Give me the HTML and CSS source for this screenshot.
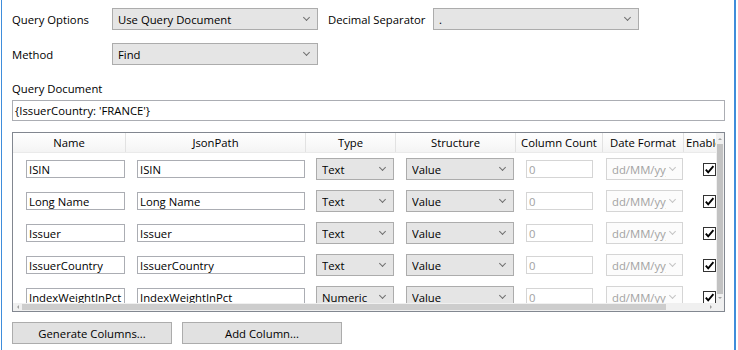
FILE: index.html
```html
<!DOCTYPE html>
<html lang="en">
<head>
    <meta charset="UTF-8">
    <title>Query Options</title>
    <link rel="stylesheet" href="styles.css">
</head>
<body>
    <div class="panel">
        <div class="options">
            <label class="label">Query Options</label>
            <div class="combo"><span class="value">Use Query Document</span><span class="chev"></span></div>
            <label class="label label-right">Decimal Separator</label>
            <div class="combo"><span class="value">.</span><span class="chev"></span></div>
            <label class="label">Method</label>
            <div class="combo"><span class="value">Find</span><span class="chev"></span></div>
        </div>

        <div class="qd-label">Query Document</div>
        <div class="textbox wide">{IssuerCountry: 'FRANCE'}</div>

        <div class="datagrid">
            <div class="grid-view">
                <div class="grid-row grid-header">
                    <div class="head-cell">Name</div>
                    <div class="head-cell">JsonPath</div>
                    <div class="head-cell">Type</div>
                    <div class="head-cell">Structure</div>
                    <div class="head-cell">Column Count</div>
                    <div class="head-cell">Date Format</div>
                    <div class="head-cell head-left">Enabled</div>
                </div>

                <div class="grid-row">
                    <div class="cell c-name"><div class="textbox">ISIN</div></div>
                    <div class="cell c-path"><div class="textbox">ISIN</div></div>
                    <div class="cell c-type"><div class="combo"><span class="value">Text</span><span class="chev"></span></div></div>
                    <div class="cell c-struct"><div class="combo"><span class="value">Value</span><span class="chev"></span></div></div>
                    <div class="cell c-count"><div class="textbox disabled">0</div></div>
                    <div class="cell c-date"><div class="combo disabled"><span class="value">dd/MM/yyyy</span><span class="chev"></span></div></div>
                    <div class="cell c-enabled"><span class="checkbox"><svg width="11" height="11" viewBox="0 0 11 11"><path d="M1.8 5.6 L4.2 8.4 L9.4 2.2" /></svg></span></div>
                </div>

                <div class="grid-row">
                    <div class="cell c-name"><div class="textbox">Long Name</div></div>
                    <div class="cell c-path"><div class="textbox">Long Name</div></div>
                    <div class="cell c-type"><div class="combo"><span class="value">Text</span><span class="chev"></span></div></div>
                    <div class="cell c-struct"><div class="combo"><span class="value">Value</span><span class="chev"></span></div></div>
                    <div class="cell c-count"><div class="textbox disabled">0</div></div>
                    <div class="cell c-date"><div class="combo disabled"><span class="value">dd/MM/yyyy</span><span class="chev"></span></div></div>
                    <div class="cell c-enabled"><span class="checkbox"><svg width="11" height="11" viewBox="0 0 11 11"><path d="M1.8 5.6 L4.2 8.4 L9.4 2.2" /></svg></span></div>
                </div>

                <div class="grid-row">
                    <div class="cell c-name"><div class="textbox">Issuer</div></div>
                    <div class="cell c-path"><div class="textbox">Issuer</div></div>
                    <div class="cell c-type"><div class="combo"><span class="value">Text</span><span class="chev"></span></div></div>
                    <div class="cell c-struct"><div class="combo"><span class="value">Value</span><span class="chev"></span></div></div>
                    <div class="cell c-count"><div class="textbox disabled">0</div></div>
                    <div class="cell c-date"><div class="combo disabled"><span class="value">dd/MM/yyyy</span><span class="chev"></span></div></div>
                    <div class="cell c-enabled"><span class="checkbox"><svg width="11" height="11" viewBox="0 0 11 11"><path d="M1.8 5.6 L4.2 8.4 L9.4 2.2" /></svg></span></div>
                </div>

                <div class="grid-row">
                    <div class="cell c-name"><div class="textbox">IssuerCountry</div></div>
                    <div class="cell c-path"><div class="textbox">IssuerCountry</div></div>
                    <div class="cell c-type"><div class="combo"><span class="value">Text</span><span class="chev"></span></div></div>
                    <div class="cell c-struct"><div class="combo"><span class="value">Value</span><span class="chev"></span></div></div>
                    <div class="cell c-count"><div class="textbox disabled">0</div></div>
                    <div class="cell c-date"><div class="combo disabled"><span class="value">dd/MM/yyyy</span><span class="chev"></span></div></div>
                    <div class="cell c-enabled"><span class="checkbox"><svg width="11" height="11" viewBox="0 0 11 11"><path d="M1.8 5.6 L4.2 8.4 L9.4 2.2" /></svg></span></div>
                </div>

                <div class="grid-row">
                    <div class="cell c-name"><div class="textbox">IndexWeightInPct</div></div>
                    <div class="cell c-path"><div class="textbox">IndexWeightInPct</div></div>
                    <div class="cell c-type"><div class="combo"><span class="value">Numeric</span><span class="chev"></span></div></div>
                    <div class="cell c-struct"><div class="combo"><span class="value">Value</span><span class="chev"></span></div></div>
                    <div class="cell c-count"><div class="textbox disabled">0</div></div>
                    <div class="cell c-date"><div class="combo disabled"><span class="value">dd/MM/yyyy</span><span class="chev"></span></div></div>
                    <div class="cell c-enabled"><span class="checkbox"><svg width="11" height="11" viewBox="0 0 11 11"><path d="M1.8 5.6 L4.2 8.4 L9.4 2.2" /></svg></span></div>
                </div>
            </div>

            <div class="vscroll">
                <span class="arrow-up"></span>
                <span class="vthumb"></span>
                <span class="arrow-down"></span>
            </div>
            <div class="hscroll">
                <span class="arrow-left"></span>
                <span class="hthumb"></span>
                <span class="htrack"></span>
                <span class="arrow-right"></span>
            </div>
            <div class="corner"></div>
        </div>

        <div class="buttons">
            <button class="button">Generate Columns...</button>
            <button class="button">Add Column...</button>
        </div>
    </div>
</body>
</html>
```

FILE: styles.css
```css
:root {
    --accent-blue: #3f8ddb;
    --control-bg: #e5e5e5;
    --control-border: #acacac;
    --textbox-border: #abadb3;
    --disabled-border: #d5d5d5;
    --disabled-text: #a2a2a2;
    --scroll-track: #f0f0f0;
    --scroll-thumb: #cdcdcd;
}

* {
    box-sizing: border-box;
    margin: 0;
    padding: 0;
}

body {
    font-family: 'Open Sans', 'Segoe UI', sans-serif;
    font-size: 11.3px;
    color: #000;
    background-color: #fff;
    width: 738px;
    height: 350px;
    overflow: hidden;
}

.panel {
    margin-left: 1px;
    width: 735px;
    height: 350px;
    border-left: 1px solid var(--accent-blue);
    border-right: 2px solid var(--accent-blue);
    padding: 8px 9px 0 10px;
}

/* top option rows */
.options {
    display: grid;
    grid-template-columns: 100px 206px 115px 206px;
    grid-auto-rows: 22px;
    row-gap: 13px;
    align-items: center;
}

.label-right {
    padding-left: 10px;
}

.combo {
    display: flex;
    align-items: center;
    height: 22px;
    border: 1px solid var(--control-border);
    background-color: var(--control-bg);
    padding: 0 8px 0 5px;
}

.combo .value {
    flex: 1;
    overflow: hidden;
    white-space: nowrap;
}

.chev {
    width: 5px;
    height: 5px;
    border-right: 1px solid #707070;
    border-bottom: 1px solid #707070;
    transform: rotate(45deg);
    margin: 0 0 3px 4px;
}

.combo.disabled {
    background-color: #fcfcfc;
    border-color: var(--disabled-border);
    color: var(--disabled-text);
    padding-right: 7px;
}

.combo.disabled .chev {
    border-color: #c4c4c4;
}

.qd-label {
    margin-top: 16px;
    height: 16px;
    line-height: 16px;
    margin-bottom: 3px;
}

.textbox {
    display: flex;
    align-items: center;
    height: 18px;
    border: 1px solid var(--textbox-border);
    padding: 0 2px;
    white-space: nowrap;
    overflow: hidden;
}

.textbox.wide {
    height: 21px;
}

.textbox.disabled {
    border-color: var(--disabled-border);
    color: var(--disabled-text);
}

/* data grid */
.datagrid {
    margin-top: 11px;
    height: 180px;
    border: 1px solid #828790;
    display: grid;
    grid-template-columns: 1fr 8px;
    grid-template-rows: 1fr 8px;
}

.grid-view {
    overflow: hidden;
}

.grid-row {
    display: grid;
    grid-template-columns: 113px 180px 90px 120px 87px 81px 60px;
    width: 731px;
    height: 32px;
}

.grid-header {
    height: 20px;
    background: linear-gradient(#ffffff, #f4f4f4);
    border-bottom: 1px solid #eaeaea;
}

.head-cell {
    text-align: center;
    line-height: 19px;
    border-right: 1px solid #e2e2e2;
}

.head-cell.head-left {
    text-align: left;
    padding-left: 2px;
    border-right: none;
}

.cell {
    display: flex;
    align-items: center;
}

.c-name { padding: 0 1px 0 13px; }
.c-path { padding: 0 1px 0 11px; }
.c-type { padding: 0 2px 0 10px; }
.c-struct { padding: 0 2px 0 10px; }
.c-count { padding: 0 10px 0 10px; }
.c-date { padding: 0 1px 0 3px; }
.c-enabled { padding-left: 19px; }

.cell > * {
    flex: 1;
    min-width: 0;
}

.c-enabled > .checkbox {
    flex: none;
}

.checkbox {
    display: flex;
    align-items: center;
    justify-content: center;
    width: 13px;
    height: 13px;
    border: 1px solid #333;
    background-color: #fff;
}

.checkbox path {
    fill: none;
    stroke: #000;
    stroke-width: 1.9;
}

/* scroll bars */
.vscroll {
    background-color: var(--scroll-track);
    display: flex;
    flex-direction: column;
    align-items: center;
    padding: 3px 0 2px;
}

.vthumb {
    flex: 1;
    width: 6px;
    margin: 4px 0 3px;
    background-color: #c2c2c2;
}

.arrow-up,
.arrow-down,
.arrow-left,
.arrow-right {
    width: 0;
    height: 0;
    border: 2px solid transparent;
}

.arrow-up { border-bottom: 2px solid #a0a0a0; }
.arrow-down { border-top: 2px solid #a0a0a0; }
.arrow-left { border-right: 2px solid #a0a0a0; margin: 0 3px 0 2px; }
.arrow-right { border-left: 2px solid #a0a0a0; margin: 0 2px 0 3px; }

.hscroll {
    background-color: var(--scroll-track);
    display: flex;
    align-items: center;
}

.hthumb {
    width: 644px;
    height: 6px;
    background-color: var(--scroll-thumb);
}

.htrack {
    flex: 1;
}

.corner {
    background-color: var(--scroll-track);
}

/* bottom buttons */
.buttons {
    display: flex;
    gap: 10px;
    margin-top: 10px;
}

.button {
    width: 160px;
    height: 22px;
    border: 1px solid var(--control-border);
    background-color: #e1e1e1;
    font-family: inherit;
    font-size: inherit;
    color: #000;
}
```
